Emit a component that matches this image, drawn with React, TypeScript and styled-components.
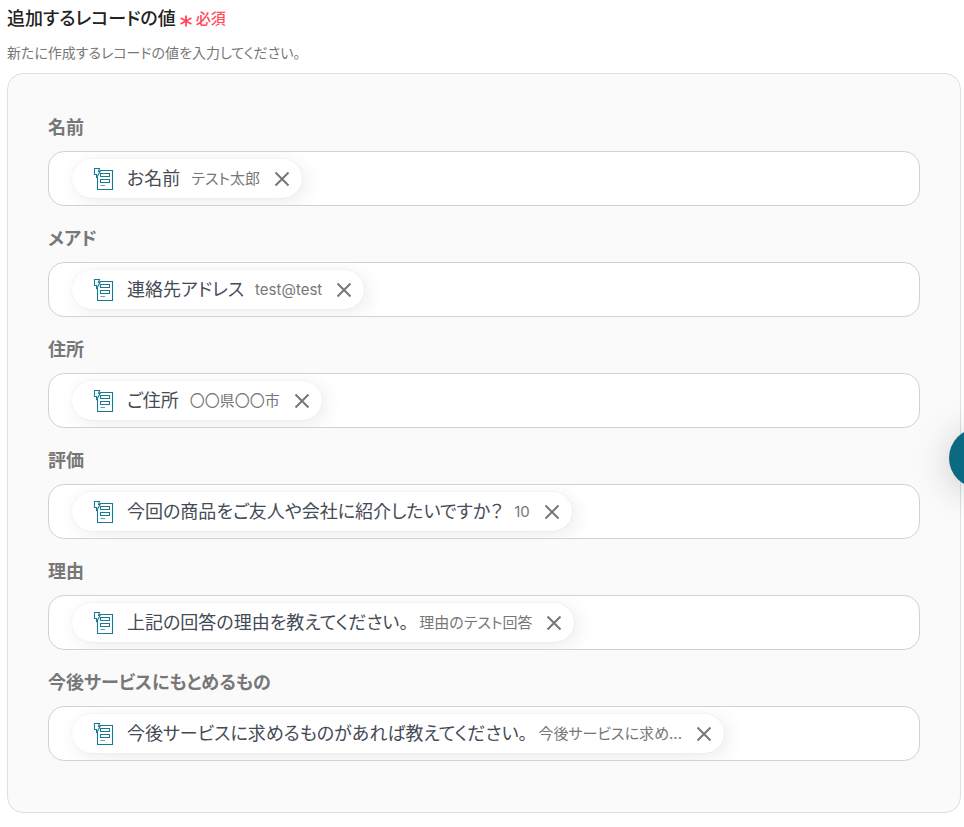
import React from "react";
import styled, { createGlobalStyle } from "styled-components";

const GlobalStyle = createGlobalStyle`
  *, *::before, *::after { box-sizing: border-box; }
  body {
    margin: 0;
    background: #ffffff;
    color: #222222;
    font-family: Inter, "Noto Sans CJK JP", sans-serif;
    font-feature-settings: "palt";
  }
`;

const Page = styled.main`
  padding: 6px 3px 14px 7px;
`;

const Header = styled.header`
  display: flex;
  align-items: center;
  gap: 4px;
  height: 26px;
`;

const Title = styled.h1`
  margin: 0;
  font-size: 18px;
  line-height: 26px;
  font-weight: 500;
`;

const Required = styled.span`
  display: inline-flex;
  align-items: center;
  gap: 4px;
  color: #ff4b5c;
  font-size: 15px;
  line-height: 26px;
  font-weight: 500;

  svg {
    margin-top: 4px;
  }
`;

const Description = styled.p`
  margin: 10px 0;
  color: #777777;
  font-size: 14px;
  line-height: 21px;
`;

const Panel = styled.section`
  display: flex;
  flex-direction: column;
  gap: 20px;
  padding: 41px 40px 51px;
  background: #fafafa;
  border: 1px solid #dcdfe3;
  border-radius: 16px;
`;

const Field = styled.div`
  display: flex;
  flex-direction: column;
  gap: 10px;
`;

const Label = styled.span`
  color: #777777;
  font-size: 18px;
  line-height: 26px;
  font-weight: 700;
`;

const Box = styled.div`
  display: flex;
  align-items: center;
  height: 55px;
  padding: 0 23px;
  background: #ffffff;
  border: 1px solid #cfd2da;
  border-radius: 16px;
  overflow: hidden;
`;

const Chip = styled.span`
  display: inline-flex;
  align-items: center;
  height: 39px;
  padding: 0 12px 0 20px;
  background: #ffffff;
  border-radius: 20px;
  box-shadow: 0 0 2px rgba(0, 0, 0, 0.08), 4px 4px 20px rgba(0, 0, 0, 0.08);
  white-space: nowrap;
`;

const ChipName = styled.span`
  margin-left: 11px;
  color: #444b55;
  font-size: 18px;
  line-height: 26px;
`;

const ChipValue = styled.span`
  max-width: 150px;
  margin-left: 11px;
  color: #777777;
  font-size: 15px;
  line-height: 24px;
  overflow: hidden;
  text-overflow: ellipsis;
`;

const RemoveButton = styled.button`
  display: inline-flex;
  margin-left: 14px;
  padding: 0;
  border: 0;
  background: none;
  color: #777777;
  cursor: pointer;
`;

const FloatingButton = styled.button`
  position: fixed;
  top: 428px;
  right: -45px;
  width: 60px;
  height: 60px;
  padding: 0;
  border: 0;
  border-radius: 50%;
  background: #0b6a82;
  box-shadow: 0 4px 36px rgba(0, 0, 0, 0.2);
  cursor: pointer;
`;

const Asterisk = () => (
  <svg width="12" height="12" viewBox="0 0 12 12" fill="none" stroke="currentColor" strokeWidth="1.8" aria-hidden="true">
    <path d="M6 0.5V11.5M0.6 3L11.4 9M11.4 3L0.6 9" />
  </svg>
);

const FormIcon = () => (
  <svg width="24" height="24" viewBox="0 0 24 24" fill="none" stroke="#187a92" strokeWidth="1.1" aria-hidden="true">
    <path d="M7.5 3.5H20.5V22.5H5.5V10" />
    <path d="M8.5 6.5H17.5V9.5H8.5ZM8.5 12.5H17.5V15.5H8.5Z" />
    <path d="M8.5 18.5H13" strokeOpacity="0.7" />
    <path d="M2.5 1.5H7.5L6.5 4.5H8L4.5 11V7.5H2.5Z" fill="#ffffff" />
  </svg>
);

const CloseIcon = () => (
  <svg width="16" height="16" viewBox="0 0 16 16" fill="none" stroke="currentColor" strokeWidth="2" aria-hidden="true">
    <path d="M1.5 1.5L14.5 14.5M14.5 1.5L1.5 14.5" />
  </svg>
);

const fields = [
  { label: "名前", name: "お名前", value: "テスト太郎" },
  { label: "メアド", name: "連絡先アドレス", value: "test@test" },
  { label: "住所", name: "ご住所", value: "〇〇県〇〇市" },
  { label: "評価", name: "今回の商品をご友人や会社に紹介したいですか？", value: "10" },
  { label: "理由", name: "上記の回答の理由を教えてください。", value: "理由のテスト回答" },
  {
    label: "今後サービスにもとめるもの",
    name: "今後サービスに求めるものがあれば教えてください。",
    value: "今後サービスに求め...",
  },
];

export default function App() {
  return (
    <>
      <GlobalStyle />
      <Page lang="ja">
        <Header>
          <Title>追加するレコードの値</Title>
          <Required>
            <Asterisk />
            必須
          </Required>
        </Header>
        <Description>新たに作成するレコードの値を入力してください。</Description>
        <Panel>
          {fields.map((field, index) => (
            <Field key={field.label} role="group" aria-labelledby={`field-${index}`}>
              <Label id={`field-${index}`}>{field.label}</Label>
              <Box>
                <Chip>
                  <FormIcon />
                  <ChipName>{field.name}</ChipName>
                  <ChipValue>{field.value}</ChipValue>
                  <RemoveButton type="button" aria-label={`${field.name}を削除`}>
                    <CloseIcon />
                  </RemoveButton>
                </Chip>
              </Box>
            </Field>
          ))}
        </Panel>
      </Page>
      <FloatingButton type="button" aria-label="メニューを開く" />
    </>
  );
}
